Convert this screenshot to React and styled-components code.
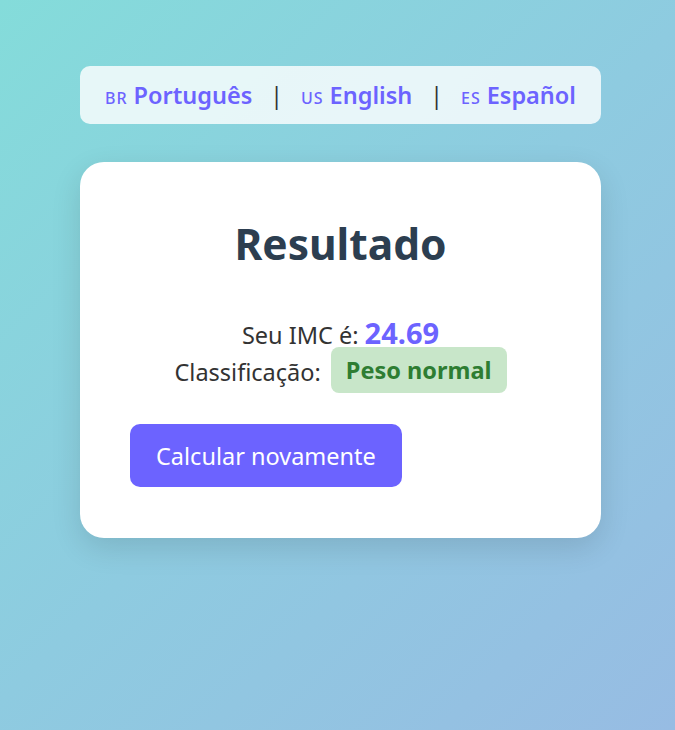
import styled, { createGlobalStyle } from "styled-components";

const GlobalStyle = createGlobalStyle`
  html, body {
    margin: 0;
    padding: 0;
  }
  body {
    min-height: 730px;
    font-family: "Noto Sans", "Open Sans", sans-serif;
    background: linear-gradient(135deg, #84dcda 0%, #8ecbe0 50%, #97bce3 100%);
  }
`;

const Page = styled.div`
  min-height: 730px;
  padding-top: 66px;
  box-sizing: border-box;
  display: flex;
  flex-direction: column;
  align-items: center;
  padding-left: 6px;
`;

const LangBar = styled.nav`
  width: 521px;
  height: 58px;
  box-sizing: border-box;
  background: rgba(255, 255, 255, 0.8);
  border-radius: 10px;
  display: flex;
  align-items: center;
  justify-content: center;
  gap: 18px;
  margin-bottom: 38px;
`;

const LangButton = styled.button`
  border: none;
  background: none;
  padding: 0;
  cursor: pointer;
  font-family: inherit;
  font-size: 23.5px;
  font-weight: 600;
  color: #6c63ff;
  display: flex;
  align-items: baseline;
  gap: 6px;
`;

const Code = styled.span`
  font-size: 16px;
  font-weight: 500;
  letter-spacing: 1px;
`;

const Sep = styled.span`
  font-size: 23px;
  color: #333;
`;

const Card = styled.div`
  width: 521px;
  box-sizing: border-box;
  background: #fff;
  border-radius: 24px;
  box-shadow: 0 10px 30px rgba(0, 0, 0, 0.12);
  padding: 52px 50px 51px;
`;

const Title = styled.h1`
  margin: 0 0 40px;
  text-align: center;
  font-size: 42.5px;
  line-height: 60px;
  font-weight: 700;
  color: #2c3e50;
`;

const Result = styled.div`
  text-align: center;
  font-size: 23.5px;
  line-height: 37px;
  color: #333;
  margin-bottom: 33px;
`;

const Value = styled.span`
  font-size: 29px;
  font-weight: 700;
  color: #6c63ff;
`;

const Badge = styled.span`
  position: relative;
  top: -2px;
  padding: 7px 15px;
  border-radius: 8px;
  background: #c8e6c9;
  color: #2e7d32;
  font-weight: 700;
  margin-left: 4px;
`;

const Button = styled.button`
  border: none;
  border-radius: 10px;
  background: #6c63ff;
  color: #fff;
  font-family: inherit;
  font-size: 23.5px;
  height: 63px;
  padding: 0 26px;
  cursor: pointer;
`;

export default function App() {
  return (
    <>
      <GlobalStyle />
      <Page>
        <LangBar>
          <LangButton>
            <Code>BR</Code>Português
          </LangButton>
          <Sep>|</Sep>
          <LangButton>
            <Code>US</Code>English
          </LangButton>
          <Sep>|</Sep>
          <LangButton>
            <Code>ES</Code>Español
          </LangButton>
        </LangBar>
        <Card>
          <Title>Resultado</Title>
          <Result>
            <div>
              Seu IMC é: <Value>24.69</Value>
            </div>
            <div>
              Classificação: <Badge>Peso normal</Badge>
            </div>
          </Result>
          <Button>Calcular novamente</Button>
        </Card>
      </Page>
    </>
  );
}
